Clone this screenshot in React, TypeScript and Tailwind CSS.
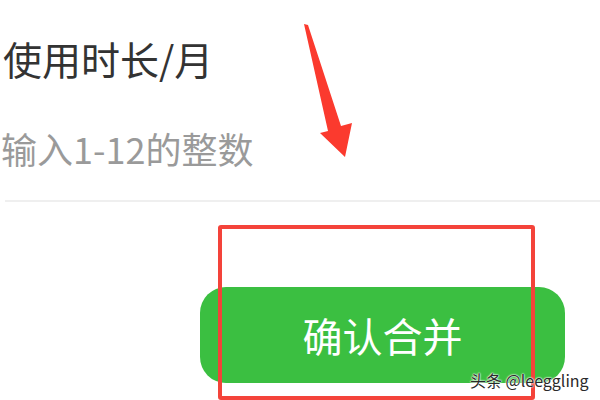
import React from "react";

const cjk = { fontFamily: '"Noto Sans CJK SC", "Noto Sans", sans-serif' };

function Arrow() {
  return (
    <svg className="absolute left-0 top-0" width="600" height="400" viewBox="0 0 600 400">
      <polygon
        points="304,24 308,25 341,126 352,123 345,157 320,133 328,131"
        fill="#fb3a2e"
      />
    </svg>
  );
}

export default function App() {
  return (
    <div className="relative w-[600px] h-[400px] overflow-hidden bg-white" style={cjk}>
      <div className="flex flex-col">
        <div className="pl-[3px] pt-[32px] h-[92px] text-[39px] leading-[52px] text-[#333333]">
          使用时长/月
        </div>
        <div className="pl-[1px] pt-[32px] h-[108px] text-[36px] leading-[48px] text-[#9a9a9a]">
          输入1-12的整数
        </div>
        <div className="ml-[5px] h-[2px] bg-[#efefef]" />
        <div className="pl-[200px] pt-[85px]">
          <div className="w-[365px] h-[96px] rounded-[26px] bg-[#3bbf41] flex items-center justify-center text-white text-[40px]">
            确认合并
          </div>
        </div>
      </div>

      {/* annotation layer */}
      <div className="absolute left-[218px] top-[225px] w-[317px] h-[175px] border-4 border-[#f4433a] rounded-[3px]" />
      <Arrow />
      <div
        className="absolute left-[470px] top-[369px] text-[16px] leading-[22px] text-[#2a2a2a]"
        style={{ textShadow: "0 0 2px #fff, 0 0 2px #fff, 0 0 1px #fff" }}
      >
        头条 @leeggling
      </div>
    </div>
  );
}
